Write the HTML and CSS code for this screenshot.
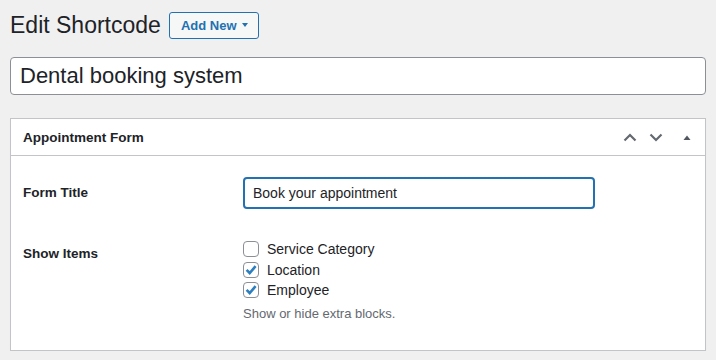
FILE: index.html
```html
<!DOCTYPE html>
<html lang="en">
<head>
    <meta charset="UTF-8">
    <title>Edit Shortcode</title>
    <link rel="stylesheet" href="styles.css">
</head>
<body>

<div class="wrap">
    <div class="page-head">
        <h1>Edit Shortcode</h1>
        <a class="title-action" href="#">Add New <span class="caret"></span></a>
    </div>

    <input class="title-input" type="text" value="Dental booking system">

    <div class="postbox">
        <div class="postbox-header">
            <h2>Appointment Form</h2>
            <div class="handle-actions">
                <button class="handle handle-narrow" type="button">
                    <svg width="14" height="9" viewBox="0 0 14 9"><path d="M1.5 7.5 L7 2 L12.5 7.5" fill="none" stroke="#646970" stroke-width="2.2"/></svg>
                </button>
                <button class="handle handle-narrow" type="button">
                    <svg width="14" height="9" viewBox="0 0 14 9"><path d="M1.5 1.5 L7 7 L12.5 1.5" fill="none" stroke="#646970" stroke-width="2.2"/></svg>
                </button>
                <button class="handle" type="button">
                    <svg width="8" height="5" viewBox="0 0 8 5"><path d="M0.5 5 L4 0.5 L7.5 5 Z" fill="#50575e"/></svg>
                </button>
            </div>
        </div>

        <div class="postbox-body">
            <div class="field-row first-row">
                <label class="field-label" for="form_title">Form Title</label>
                <div class="field-value">
                    <input class="text-input" id="form_title" type="text" value="Book your appointment">
                </div>
            </div>

            <div class="field-row items-row">
                <div class="field-label items-label">Show Items</div>
                <div class="field-value">
                    <label class="check-item">
                        <span class="checkbox"></span>
                        Service Category
                    </label>
                    <label class="check-item">
                        <span class="checkbox">
                            <svg width="14" height="14" viewBox="0 0 14 14"><path d="M2.6 6.8 L5.7 10 L11.6 3.2" fill="none" stroke="#2e7fc0" stroke-width="2.6"/></svg>
                        </span>
                        Location
                    </label>
                    <label class="check-item">
                        <span class="checkbox">
                            <svg width="14" height="14" viewBox="0 0 14 14"><path d="M2.6 6.8 L5.7 10 L11.6 3.2" fill="none" stroke="#2e7fc0" stroke-width="2.6"/></svg>
                        </span>
                        Employee
                    </label>
                    <p class="description">Show or hide extra blocks.</p>
                </div>
            </div>
        </div>
    </div>
</div>

</body>
</html>
```

FILE: styles.css
```css
body {
    margin: 0;
    background-color: #f0f0f1;
    color: #1d2327;
    font-family: "Liberation Sans", Arial, sans-serif;
    font-size: 13px;
}

.wrap {
    padding: 0 10px;
}

.page-head {
    display: flex;
    align-items: center;
    padding-top: 10px;
}

.page-head h1 {
    margin: 0;
    font-size: 23px;
    font-weight: 400;
    line-height: 30px;
}

.title-action {
    display: flex;
    align-items: center;
    margin-left: 8px;
    padding: 0 10px 0 11px;
    height: 25px;
    border: 1px solid #2271b1;
    border-radius: 3px;
    background-color: #f6f7f7;
    color: #2271b1;
    font-size: 13px;
    font-weight: 600;
    text-decoration: none;
}

.caret {
    display: inline-block;
    margin-left: 5px;
    border-left: 3.5px solid transparent;
    border-right: 3.5px solid transparent;
    border-top: 4px solid #2271b1;
}

.title-input {
    display: block;
    box-sizing: border-box;
    width: 100%;
    height: 38px;
    margin: 17px 0 0;
    padding: 0 9px;
    border: 1px solid #8c8f94;
    border-radius: 4px;
    background-color: #fff;
    color: #1d2327;
    font-family: inherit;
    font-size: 22px;
    outline: none;
}

.postbox {
    margin-top: 23px;
    border: 1px solid #c3c4c7;
    background-color: #fff;
    box-shadow: 0 1px 1px rgba(0, 0, 0, 0.04);
}

.postbox-header {
    display: flex;
    align-items: center;
    justify-content: space-between;
    height: 36px;
    padding-left: 12px;
    border-bottom: 1px solid #c3c4c7;
}

.postbox-header h2 {
    margin: 0;
    font-size: 13.5px;
    font-weight: 600;
}

.handle-actions {
    display: flex;
    height: 36px;
}

.handle {
    display: flex;
    align-items: center;
    justify-content: center;
    width: 36px;
    height: 36px;
    padding: 0;
    border: 0;
    background: none;
}

.handle-narrow {
    width: 26px;
}

.postbox-body {
    padding: 0 12px 27px;
}

.field-row {
    display: grid;
    grid-template-columns: 220px 1fr;
}

.first-row {
    align-items: center;
    padding-top: 21px;
}

.items-row {
    align-items: start;
    padding-top: 30px;
}

.field-label {
    font-size: 13.5px;
    font-weight: 600;
    line-height: 20px;
}

.items-label {
    padding-top: 5px;
}

.text-input {
    display: block;
    box-sizing: border-box;
    width: 352px;
    height: 32px;
    padding: 0 8px;
    border: 2px solid #2271b1;
    border-radius: 4px;
    color: #1d2327;
    font-family: inherit;
    font-size: 14px;
    outline: none;
}

.check-item {
    display: flex;
    align-items: center;
    height: 20.5px;
    font-size: 14px;
}

.checkbox {
    display: flex;
    align-items: center;
    justify-content: center;
    box-sizing: border-box;
    width: 16px;
    height: 16px;
    margin-right: 8px;
    border: 1px solid #8c8f94;
    border-radius: 4px;
    background-color: #fff;
}

.description {
    margin: 4px 0 0;
    color: #646970;
    font-size: 13px;
    line-height: 18px;
}
```
